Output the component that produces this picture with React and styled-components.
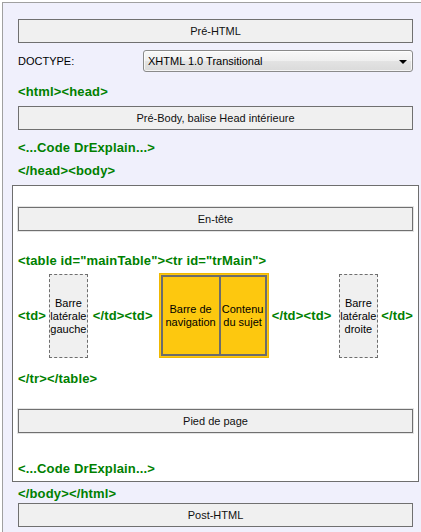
import React from "react";
import styled, { createGlobalStyle } from "styled-components";

const GlobalStyle = createGlobalStyle`
  html, body {
    margin: 0;
    padding: 0;
    background: #ffffff;
  }
  body {
    font-family: "Liberation Sans", Arial, sans-serif;
    font-size: 11px;
    color: #000;
  }
`;

const Panel = styled.div`
  box-sizing: border-box;
  margin: 2px 0 0 2px;
  height: 530px;
  overflow: hidden;
  background: #f0f0fc;
  border-left: 1px solid #a0a0a0;
  border-top: 1px solid #a0a0a0;
  padding: 16px 8px 0 15px;
`;

const Block = styled.div`
  box-sizing: border-box;
  height: 24px;
  margin-top: ${(p) => p.$mt || 0}px;
  display: flex;
  align-items: center;
  justify-content: center;
  background: #f0f0f0;
  border: 1px solid #707070;
  box-shadow: ${(p) => (p.$ring ? "0 0 0 1px #e4e4e4" : "none")};
  font-size: 11px;
  color: #111;
`;

const DoctypeRow = styled.div`
  display: flex;
  align-items: center;
  margin-top: 7px;
  height: 22px;
`;

const Label = styled.span`
  width: 125px;
  font-size: 11px;
`;

const Combo = styled.div`
  box-sizing: border-box;
  flex: 1;
  height: 22px;
  position: relative;
  display: flex;
  align-items: center;
  padding-left: 4px;
  border: 1px solid #8a8a8a;
  border-radius: 3px;
  background: linear-gradient(#f8f8f8 0%, #efefef 50%, #e3e3e3 51%, #dadada 100%);
  box-shadow: inset 0 0 0 1px rgba(255, 255, 255, 0.7);
  font-size: 11px;
`;

const Arrow = styled.span`
  position: absolute;
  right: 5px;
  top: 9px;
  width: 0;
  height: 0;
  border-left: 4px solid transparent;
  border-right: 4px solid transparent;
  border-top: 4px solid #000;
`;

const Tag = styled.div`
  font-family: "Liberation Sans", Arial, sans-serif;
  font-weight: bold;
  font-size: 13px;
  letter-spacing: 0.15px;
  line-height: 16px;
  height: ${(p) => p.$h || 16}px;
  color: #008000;
  white-space: nowrap;
  margin-top: ${(p) => p.$mt || 0}px;
  margin-left: ${(p) => p.$ml || 0}px;
`;

const BodyBox = styled.div`
  margin: 6px -6px 0 -6px;
  background: #ffffff;
  border: 1px solid #6e6e6e;
  padding: 0 5px 4px 5px;
`;

const TableRow = styled.div`
  display: flex;
  align-items: center;
  height: 85px;
  margin-top: 4px;
`;

const Sidebar = styled.div`
  box-sizing: border-box;
  width: ${(p) => p.$w}px;
  height: 84px;
  margin-left: ${(p) => p.$ml}px;
  margin-top: 1px;
  display: flex;
  align-items: center;
  justify-content: center;
  text-align: center;
  background: #f0f0f0;
  border: 1px dashed #6e6e6e;
  font-size: 11px;
  line-height: 13px;
  color: #000;
`;

const Frame = styled.div`
  box-sizing: border-box;
  width: 110px;
  height: 85px;
  margin-left: 6px;
  padding: 1px;
  background: #fdc80f;
  border: 1px solid #f0b800;
`;

const Cells = styled.div`
  box-sizing: border-box;
  display: flex;
  height: 100%;
  border: 2px solid #6c6c6c;
`;

const Cell = styled.div`
  width: ${(p) => p.$w}px;
  display: flex;
  align-items: center;
  justify-content: center;
  text-align: center;
  font-size: 11px;
  line-height: 13px;
  color: #000;
  border-left: ${(p) => (p.$divider ? "2px solid #6c6c6c" : "none")};
`;

export default function App() {
  return (
    <>
      <GlobalStyle />
      <Panel>
        <Block>Pré-HTML</Block>
        <DoctypeRow>
          <Label>DOCTYPE:</Label>
          <Combo>
            XHTML 1.0 Transitional
            <Arrow />
          </Combo>
        </DoctypeRow>
        <Tag $mt={12}>&lt;html&gt;&lt;head&gt;</Tag>
        <Block $mt={6}>Pré-Body, balise Head intérieure</Block>
        <Tag $mt={10}>&lt;...Code DrExplain...&gt;</Tag>
        <Tag $mt={7}>&lt;/head&gt;&lt;body&gt;</Tag>
        <BodyBox>
          <Block $mt={21} $ring>
            En-tête
          </Block>
          <Tag $mt={22}>&lt;table id="mainTable"&gt;&lt;tr id="trMain"&gt;</Tag>
          <TableRow>
            <Tag>&lt;td&gt;</Tag>
            <Sidebar $w={41} $ml={3}>
              Barre
              <br />
              latérale
              <br />
              gauche
            </Sidebar>
            <Tag $ml={5}>&lt;/td&gt;&lt;td&gt;</Tag>
            <Frame>
              <Cells>
                <Cell $w={57}>
                  Barre de
                  <br />
                  navigation
                </Cell>
                <Cell $w={45} $divider>
                  Contenu
                  <br />
                  du sujet
                </Cell>
              </Cells>
            </Frame>
            <Tag $ml={3}>&lt;/td&gt;&lt;td&gt;</Tag>
            <Sidebar $w={42} $ml={7}>
              Barre
              <br />
              latérale
              <br />
              droite
            </Sidebar>
            <Tag $ml={3}>&lt;/td&gt;</Tag>
          </TableRow>
          <Tag $mt={13}>&lt;/tr&gt;&lt;/table&gt;</Tag>
          <Block $mt={22} $ring>
            Pied de page
          </Block>
          <Tag $mt={28}>&lt;...Code DrExplain...&gt;</Tag>
        </BodyBox>
        <Tag $mt={4} $h={13}>
          &lt;/body&gt;&lt;/html&gt;
        </Tag>
        <Block $mt={4}>Post-HTML</Block>
      </Panel>
    </>
  );
}
